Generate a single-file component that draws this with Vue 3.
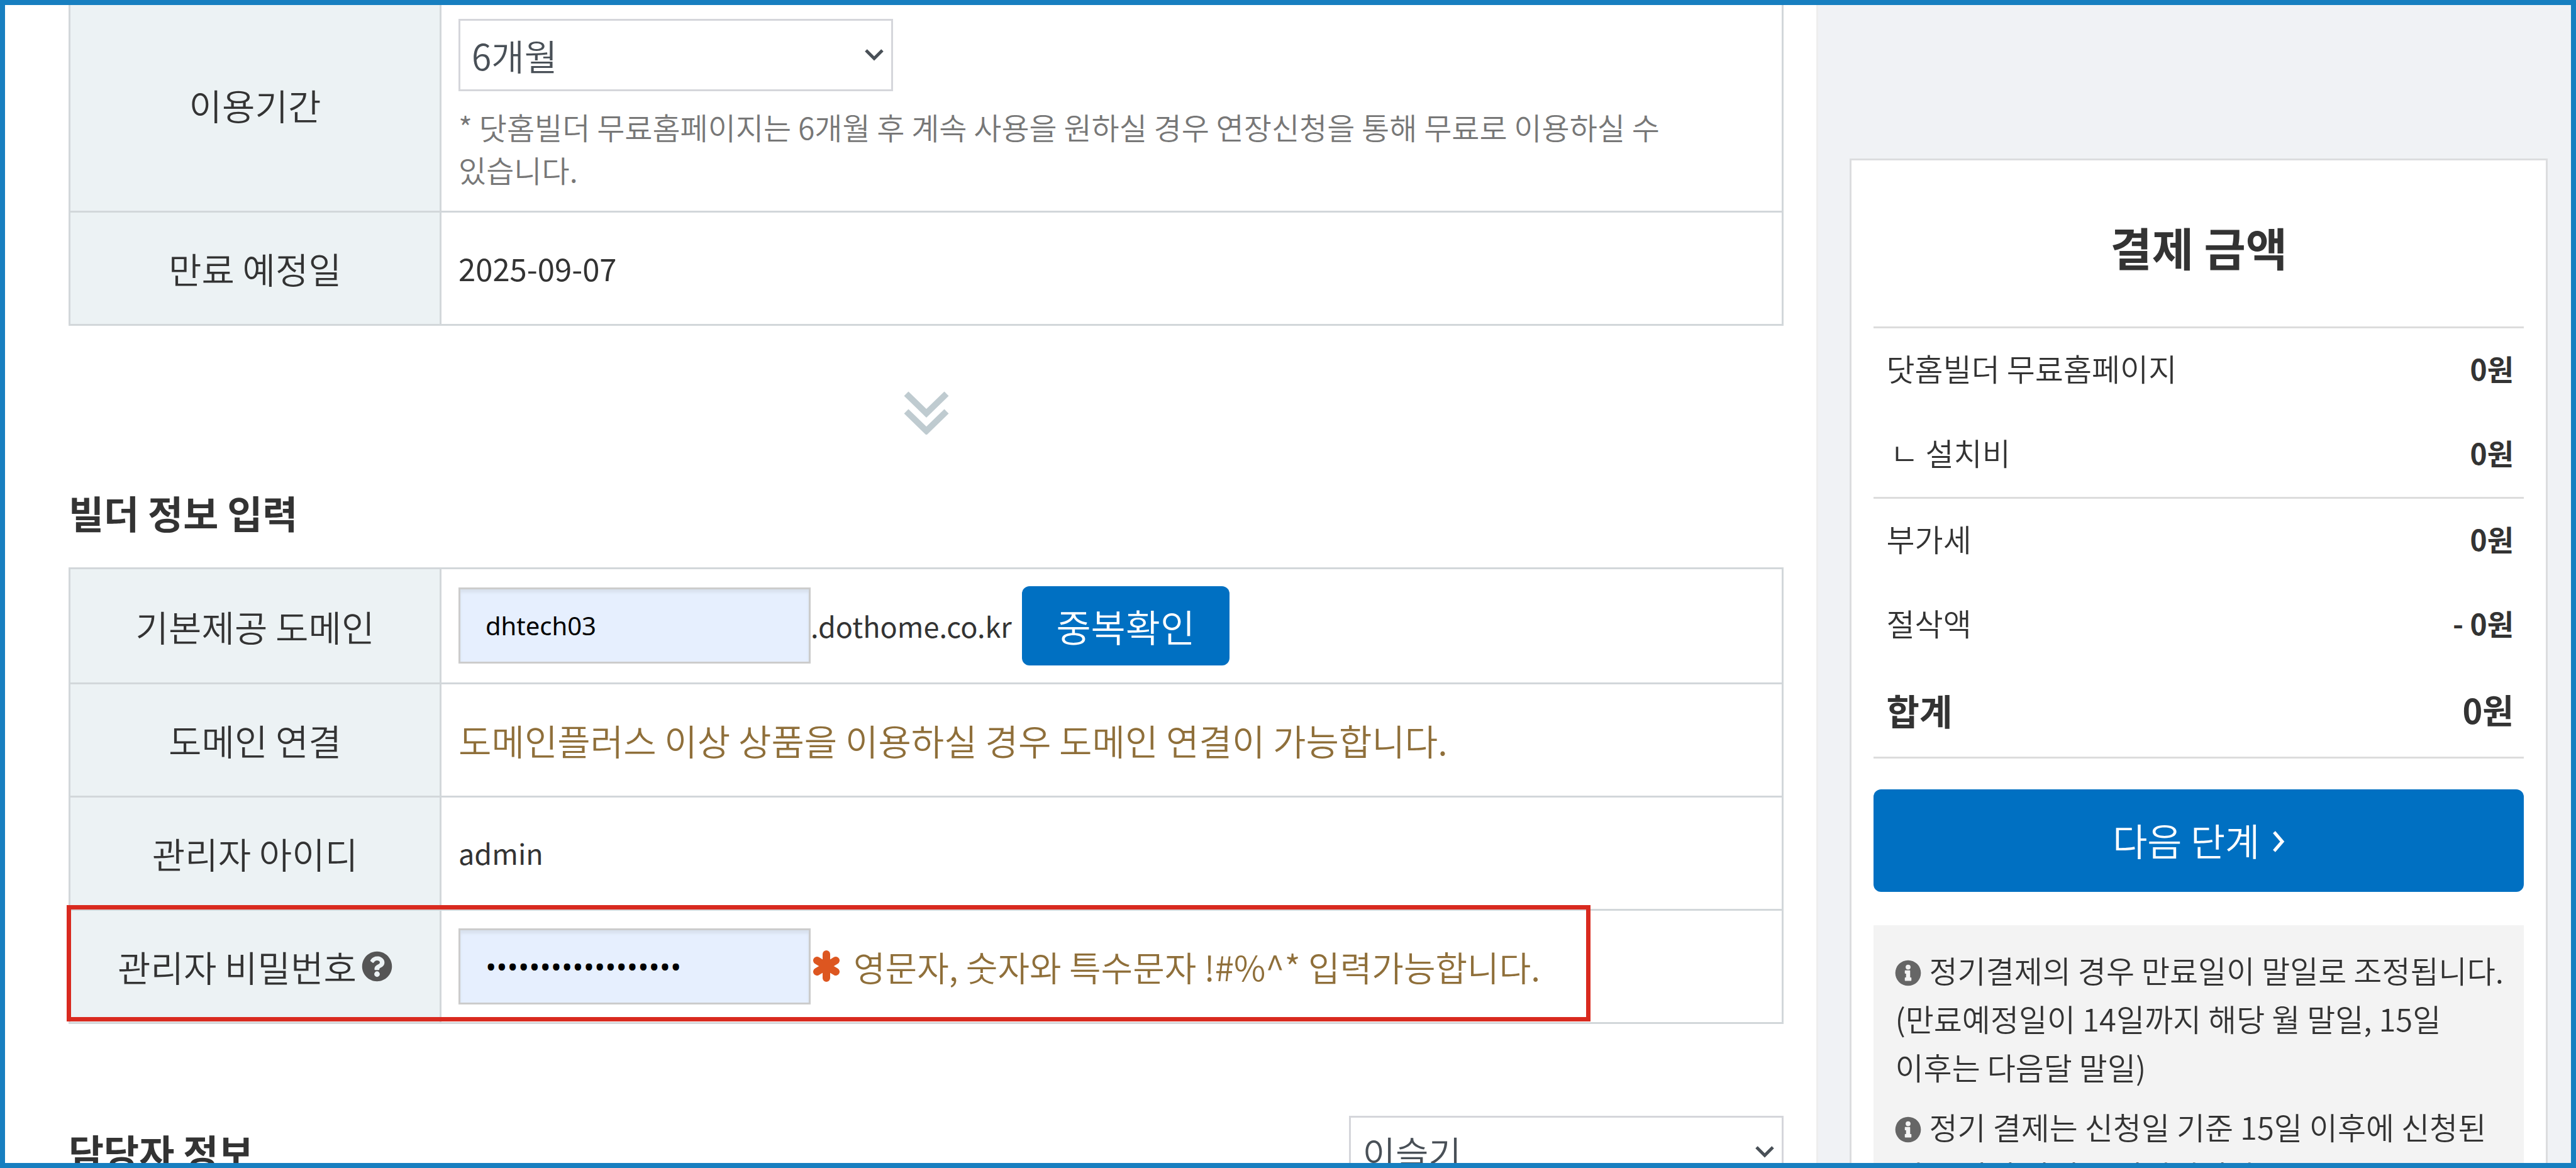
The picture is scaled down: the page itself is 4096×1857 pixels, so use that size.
<template>
  <div class="page">
    <main class="form-area">
      <table class="info-table">
        <tbody>
          <tr class="row-period">
            <th scope="row"><label for="period">이용기간</label></th>
            <td>
              <div class="select-wrap">
                <select id="period" v-model="period" class="select">
                  <option>6개월</option>
                </select>
                <svg class="select-arrow" viewBox="0 0 32 20"><path d="M3 3l13 13L29 3" /></svg>
              </div>
              <p class="help-text">* 닷홈빌더 무료홈페이지는 6개월 후 계속 사용을 원하실 경우 연장신청을 통해 무료로 이용하실 수<br />있습니다.</p>
            </td>
          </tr>
          <tr>
            <th scope="row">만료 예정일</th>
            <td class="date">2025-09-07</td>
          </tr>
        </tbody>
      </table>

      <div class="step-arrow">
        <svg viewBox="0 0 74 70">
          <path d="M5 5l32 31L69 5M5 33l32 31L69 33" />
        </svg>
      </div>

      <h2 class="section-title">빌더 정보 입력</h2>
      <div class="table-wrap">
        <table class="info-table">
          <tbody>
            <tr class="row-domain">
              <th scope="row"><label for="domain">기본제공 도메인</label></th>
              <td>
                <div class="field">
                  <input id="domain" v-model="domain" type="text" class="input" />
                  <span class="latin">.dothome.co.kr</span>
                  <button type="button" class="btn btn-check">중복확인</button>
                </div>
              </td>
            </tr>
            <tr>
              <th scope="row">도메인 연결</th>
              <td class="notice">도메인플러스 이상 상품을 이용하실 경우 도메인 연결이 가능합니다.</td>
            </tr>
            <tr>
              <th scope="row">관리자 아이디</th>
              <td class="latin">admin</td>
            </tr>
            <tr>
              <th scope="row">
                <div class="label-help">
                  <label for="password">관리자 비밀번호</label>
                  <svg class="icon-help" viewBox="0 0 512 512">
                    <path d="M504 256c0 137-111 248-248 248S8 393 8 256 119 8 256 8s248 111 248 248zM263 90c-55 0-89 23-117 64-3 6-2 12 3 16l35 26c5 4 12 3 16-2 18-23 30-36 57-36 21 0 46 13 46 33 0 15-12 23-33 34-24 14-56 31-56 73v7c0 7 5 12 12 12h56c7 0 12-5 12-12v-4c0-29 86-31 86-111 0-60-62-100-117-100zm-7 248a46 46 0 1 0 0 92 46 46 0 0 0 0-92z" />
                  </svg>
                </div>
              </th>
              <td>
                <div class="field">
                  <input id="password" v-model="password" type="password" class="input input-password" />
                  <svg class="icon-required" viewBox="0 0 46 50">
                    <path d="M23 6v38M8 16l30 18M38 16L8 34" />
                  </svg>
                  <span class="notice">영문자, 숫자와 특수문자 !#%^* 입력가능합니다.</span>
                </div>
              </td>
            </tr>
          </tbody>
        </table>
        <div class="highlight"></div>
      </div>

      <div class="manager">
        <h2 class="section-title"><label for="manager">담당자 정보</label></h2>
        <div class="select-wrap">
          <select id="manager" v-model="manager" class="select">
            <option>이슬기</option>
          </select>
          <svg class="select-arrow" viewBox="0 0 32 20"><path d="M3 3l13 13L29 3" /></svg>
        </div>
      </div>
    </main>

    <aside class="side">
      <section class="summary">
        <h2 class="summary-title">결제 금액</h2>
        <dl
          v-for="(group, index) in priceGroups"
          :key="index"
          class="price-group"
        >
          <div
            v-for="item in group"
            :key="item.name"
            class="price-row"
            :class="{ 'is-sub': item.sub, 'is-total': item.total }"
          >
            <dt>{{ item.name }}</dt>
            <dd>{{ item.price }}</dd>
          </div>
        </dl>
        <button type="button" class="btn btn-next">
          다음 단계
          <svg class="icon-next" viewBox="0 0 20 34"><path d="M3 2l13 15L3 32" /></svg>
        </button>
        <ul class="notes">
          <li v-for="lines in notes" :key="lines[0]">
            <svg class="icon-info" viewBox="0 0 512 512">
              <path d="M256 8a248 248 0 1 0 0 496 248 248 0 0 0 0-496zm0 85a48 48 0 1 1 0 96 48 48 0 0 1 0-96zm64 303c0 7-5 12-12 12H204c-7 0-12-5-12-12v-44c0-7 5-12 12-12h12v-72h-12c-7 0-12-5-12-12v-40c0-7 5-12 12-12h80c7 0 12 5 12 12v124h12c7 0 12 5 12 12z" />
            </svg>
            <template v-for="(line, i) in lines" :key="i"><br v-if="i" />{{ line }}</template>
          </li>
        </ul>
      </section>
    </aside>
  </div>
</template>

<script setup>
import { ref } from 'vue';

const period = ref('6개월');
const domain = ref('dhtech03');
const password = ref('dothomebuilder2025');
const manager = ref('이슬기');

const priceGroups = [
  [
    { name: '닷홈빌더 무료홈페이지', price: '0원' },
    { name: 'ㄴ 설치비', price: '0원', sub: true },
  ],
  [
    { name: '부가세', price: '0원' },
    { name: '절삭액', price: '- 0원' },
    { name: '합계', price: '0원', total: true },
  ],
];

const notes = [
  ['정기결제의 경우 만료일이 말일로 조정됩니다.', '(만료예정일이 14일까지 해당 월 말일, 15일', '이후는 다음달 말일)'],
  ['정기 결제는 신청일 기준 15일 이후에 신청된', '경우 익월 말일로 설정됩니다.'],
];
</script>

<style>
body {
  margin: 0;
}
</style>

<style scoped>
.page {
  display: flex;
  height: 100vh;
  box-sizing: border-box;
  border: 8px solid #177fc0;
  overflow: hidden;
  background: #fff;
  color: #333;
  font-family: "Noto Sans CJK KR", "Noto Sans", sans-serif;
  font-size: 57px;
  font-weight: 350;
  line-height: 80px;
}

.form-area {
  flex: 1;
  padding: 0 52px 0 101px;
}

.info-table {
  width: 100%;
  border-collapse: collapse;
  table-layout: fixed;
}

.info-table th,
.info-table td {
  box-sizing: border-box;
  height: 180px;
  padding: 0 27px;
  border: 3px solid #d2d7da;
  text-align: left;
}

.info-table th {
  width: 590px;
  background: #ecf2f4;
  font-weight: 350;
  text-align: center;
}

.info-table .row-period th,
.info-table .row-period td {
  height: 328px;
  padding-bottom: 10px;
  border-top: 0;
}

.info-table .row-domain th,
.info-table .row-domain td {
  height: 183px;
}

.info-table .date {
  font-size: 49px;
  font-weight: 400;
}

.latin {
  font-size: 45px;
  font-weight: 400;
}

.select-wrap {
  position: relative;
  width: 691px;
}

.select {
  width: 100%;
  height: 115px;
  padding: 0 18px;
  border: 3px solid #d5d6db;
  border-radius: 0;
  background: #fff;
  color: #495057;
  font: inherit;
  appearance: none;
}

.select-arrow {
  position: absolute;
  top: 50%;
  right: 14px;
  width: 32px;
  height: 20px;
  margin-top: -10px;
  fill: none;
  stroke: #495057;
  stroke-width: 5;
  pointer-events: none;
}

.help-text {
  margin: 22px 0 0;
  color: #777;
  font-size: 48px;
  line-height: 68px;
}

.step-arrow {
  display: flex;
  justify-content: center;
  padding: 103px 0 82px;
}

.step-arrow svg {
  width: 74px;
  height: 70px;
  fill: none;
  stroke: #bfcbd0;
  stroke-width: 10;
}

.section-title {
  margin: 0;
  font-size: 61px;
  font-weight: 700;
  line-height: 84px;
}

.table-wrap {
  position: relative;
  margin-top: 45px;
}

.field {
  display: flex;
  align-items: center;
}

.input {
  box-sizing: border-box;
  width: 560px;
  height: 121px;
  padding: 0 40px;
  border: 3px solid #ccc;
  background: #e6effe;
  box-shadow: inset 0 5px 4px #d8e1ee;
  color: #000;
  font-family: "Noto Sans", sans-serif;
  font-size: 40px;
}

.input-password {
  font-size: 46px;
}

.btn {
  border: 0;
  border-radius: 12px;
  background: #0070c2;
  color: #fff;
  font: inherit;
  font-size: 60px;
}

.btn-check {
  width: 330px;
  height: 126px;
  margin-left: 16px;
}

.notice {
  color: #8f6f3a;
}

.field .notice {
  font-size: 55px;
}

.label-help {
  display: flex;
  align-items: center;
  justify-content: center;
  gap: 8px;
}

.icon-help {
  width: 49px;
  height: 49px;
  fill: #555;
}

.icon-required {
  width: 46px;
  height: 50px;
  margin: 0 20px 0 2px;
  fill: none;
  stroke: #dd5620;
  stroke-width: 12;
  stroke-linecap: round;
}

/* frame around the password row */
.highlight {
  position: absolute;
  right: 307px;
  bottom: 4px;
  left: -3px;
  height: 185px;
  box-sizing: border-box;
  border: 7px solid #d92a1f;
  pointer-events: none;
}

.manager {
  display: flex;
  align-items: center;
  justify-content: space-between;
  margin-top: 146px;
}

.side {
  width: 29.4%;
  box-sizing: border-box;
  padding: 244px 37px 0 50px;
  border-left: 3px solid #eee;
  background: #f0f2f5;
}

.summary {
  height: 100%;
  padding: 0 35px;
  border: 3px solid #dcdddf;
  background: #fff;
}

.summary-title {
  margin: 0;
  padding: 87px 0 77px;
  font-size: 72px;
  line-height: 100px;
  text-align: center;
}

.price-group {
  margin: 0;
  border-top: 3px solid #dcdcdc;
}

.price-group:last-of-type {
  border-bottom: 3px solid #dcdcdc;
}

.price-row {
  display: flex;
  align-items: center;
  justify-content: space-between;
  height: 126px;
  padding: 0 16px 8px 20px;
  font-size: 49px;
}

.price-row dd {
  margin: 0;
  font-size: 46px;
  font-weight: 700;
}

.price-row.is-sub {
  padding-left: 26px;
}

.price-row.is-total {
  height: 134px;
  font-size: 57px;
  font-weight: 700;
}

.price-row.is-total dd {
  font-size: 54px;
}

.btn-next {
  display: flex;
  align-items: center;
  justify-content: center;
  gap: 20px;
  width: 100%;
  height: 163px;
  margin-top: 49px;
  padding-bottom: 4px;
}

.icon-next {
  width: 20px;
  height: 34px;
  margin-top: 6px;
  fill: none;
  stroke: #fff;
  stroke-width: 5;
}

.notes {
  margin: 53px 0 0;
  padding: 32px 34px;
  background: #f3f3f3;
  font-size: 49px;
  line-height: 77px;
  list-style: none;
  white-space: nowrap;
}

.notes li {
  margin-bottom: 18px;
}

.icon-info {
  width: 42px;
  height: 42px;
  margin-right: 12px;
  fill: #666;
  vertical-align: -5px;
}
</style>
